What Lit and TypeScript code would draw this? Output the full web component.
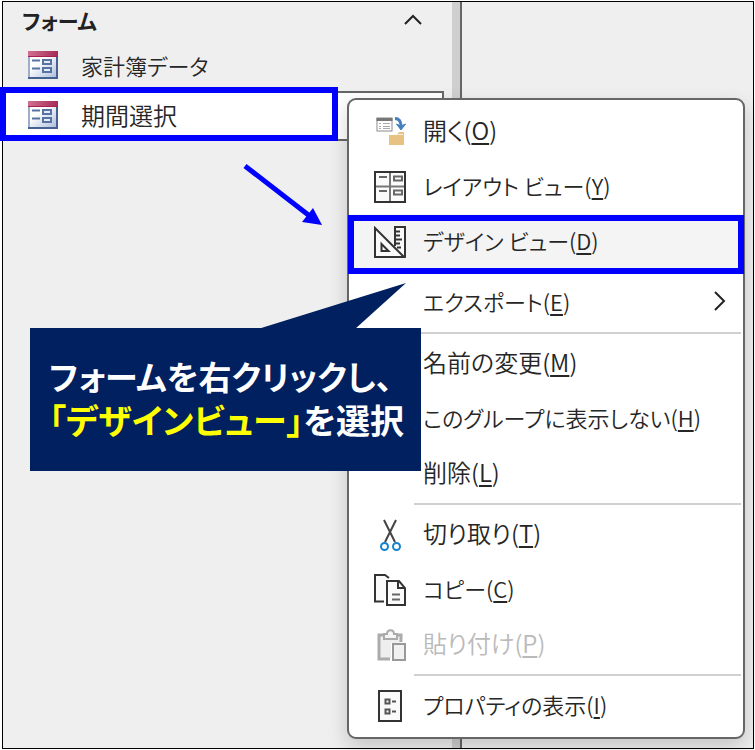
import { LitElement, html, css, svg, nothing } from "lit";
import { customElement } from "lit/decorators.js";
import { classMap } from "lit/directives/class-map.js";

interface MenuItem {
  label: string;
  key: string;
  icon?: string;
  disabled?: boolean;
  submenu?: boolean;
  current?: boolean;
  /** Labels made mostly of kana are set one step smaller. */
  kana?: boolean;
}

const GROUPS: MenuItem[][] = [
  [
    { label: "開く", key: "O", icon: "open" },
    { label: "レイアウト ビュー", key: "Y", icon: "layout", kana: true },
    { label: "デザイン ビュー", key: "D", icon: "design", current: true, kana: true },
  ],
  [{ label: "エクスポート", key: "E", submenu: true, kana: true }],
  [
    { label: "名前の変更", key: "M" },
    { label: "このグループに表示しない", key: "H", kana: true },
    { label: "削除", key: "L" },
  ],
  [
    { label: "切り取り", key: "T", icon: "cut" },
    { label: "コピー", key: "C", icon: "copy", kana: true },
    { label: "貼り付け", key: "P", icon: "paste", disabled: true },
  ],
  [{ label: "プロパティの表示", key: "I", icon: "props", kana: true }],
];

const ICONS: Record<string, unknown> = {
  open: svg`
    <rect x="3" y="2" width="15" height="13" fill="#fff" stroke="#8a8a8a"/>
    <path d="M2.500 3.500h16" stroke="#777" stroke-width="3"/>
    <path d="M5 7.500h2M5 10.500h2M5 12.500h2M9 7.500h7M9 10.500h7M9 12.500h7" stroke="#aaa"/>
    <path d="M21 2.500c4 0 6 3 6 8" fill="none" stroke="#4480bd" stroke-width="3"/>
    <path d="M22.500 8l4.500 6 4.500-6-4.500 2z" fill="#4480bd" stroke="#4480bd"/>
    <path d="M15 19h8l2-3h5v13H15z" fill="#e8c282"/>
    <path d="M24 18.500h5" stroke="#fff3dc" stroke-width="1"/>`,
  layout: svg`
    <rect x="1" y="1" width="30" height="30" fill="#fafafa" stroke="#333" stroke-width="2"/>
    <path d="M16 2v28M2 15.500h28" stroke="#777" stroke-width="2"/>
    <path d="M5 6h8M5 20h8" stroke="#666" stroke-width="2"/>
    <path d="M20 5.500h8v4h-8zM20 19.500h8v4h-8z" fill="none" stroke="#666" stroke-width="2"/>`,
  design: svg`
    <path d="M21 18V1h10v30z" fill="#fafafa"/>
    <path d="M1 2v29h29z" fill="#fafafa" stroke="#333" stroke-width="2"/>
    <path d="M21 20V1h10v30" fill="none" stroke="#333" stroke-width="2"/>
    <path d="M22 5.500h4M22 9.500h4M22 13.500h6M22 17.500h4M23 21.500h4" stroke="#333" stroke-width="2"/>
    <path d="M7.500 18v7h7z" fill="none" stroke="#333" stroke-width="2"/>`,
  cut: svg`
    <path d="M10 1l11 22M22 1L11 23" fill="none" stroke="#444" stroke-width="2"/>
    <circle cx="10.500" cy="27.500" r="3.500" fill="#fff" stroke="#1783d0" stroke-width="2"/>
    <circle cx="22.500" cy="27.500" r="3.500" fill="#fff" stroke="#1783d0" stroke-width="2"/>`,
  copy: svg`
    <path d="M10 27.500H1V1h10l4 3" fill="#fafafa" stroke="#333" stroke-width="2"/>
    <path d="M13 7h12l6 7v17H13z" fill="#fafafa" stroke="#333" stroke-width="2"/>
    <path d="M24 7v7h7" fill="none" stroke="#333" stroke-width="2"/>
    <path d="M18 20.500h8M18 25.500h8" stroke="#666" stroke-width="2"/>`,
  paste: svg`
    <path d="M16 30H5V6h22v7" fill="#eee" stroke="#ababab" stroke-width="3"/>
    <path d="M10 10V5h3c0-5 7-5 7 0h3v5z" fill="#f6f6f6" stroke="#ababab" stroke-width="2"/>
    <path d="M17 14h15v17H17z" fill="#fff"/>
    <rect x="19" y="15" width="12" height="16" fill="#f1f1f1" stroke="#999" stroke-width="2"/>`,
  props: svg`
    <rect x="5" y="1" width="22" height="30" fill="#fafafa" stroke="#333" stroke-width="2"/>
    <path d="M11.500 9.500h4v4h-4zM11.500 19.500h4v4h-4z" fill="none" stroke="#555" stroke-width="2"/>
    <path d="M18 11.500h4M18 21.500h4" stroke="#555" stroke-width="2"/>`,
};

@customElement("access-form-icon")
export class AccessFormIcon extends LitElement {
  static styles = css`
    :host { display: flex; }
    svg { display: block; }
  `;
  render() {
    return html`<svg width="30" height="28" viewBox="0 0 30 28" aria-hidden="true">
      <defs>
        <linearGradient id="paper" x1="0" y1="0" x2="1" y2="1">
          <stop offset="0.3" stop-color="#fff"/><stop offset="1" stop-color="#aebfdc"/>
        </linearGradient>
        <linearGradient id="bar" x1="0" y1="0" x2="1" y2="0">
          <stop offset="0" stop-color="#d0708f"/><stop offset="1" stop-color="#a52a58"/>
        </linearGradient>
      </defs>
      <rect width="30" height="28" fill="#9dadcb"/>
      <path d="M0 27h30M29 5v23" stroke="#46618f" stroke-width="2"/>
      <rect x="2" y="6" width="26" height="20" fill="url(#paper)"/>
      <rect width="30" height="6" fill="url(#bar)"/>
      <path d="M0 5.500h30" stroke="#a8204f"/>
      <path d="M4 9.500h8M4 17.500h8" stroke="#5873a3" stroke-width="2"/>
      <path d="M15 9h8v4h-8zM15 17h8v4h-8z" fill="#e7edf7" stroke="#5873a3" stroke-width="2"/>
    </svg>`;
  }
}

@customElement("context-menu")
export class ContextMenu extends LitElement {
  static styles = css`
    :host {
      display: block;
      box-sizing: border-box;
      padding: 4px 0;
      background: #fff;
      border: 2px solid #666;
      border-radius: 9px;
      box-shadow: 0 8px 20px rgba(0, 0, 0, 0.18);
    }
    .row { position: relative; }
    .item {
      display: flex;
      align-items: center;
      gap: 17px;
      width: 100%;
      height: 55px;
      padding: 0 16px 0 25px;
      border: 0;
      background: none;
      color: #262626;
      font: inherit;
      text-align: left;
      white-space: nowrap;
    }
    .item.kana { font-size: 22px; }
    .item.current { background: #f4f4f4; }
    .item:disabled { color: #bababa; }
    .icon { flex: none; width: 32px; height: 32px; }
    .label { flex: 1; padding-bottom: 4px; }
    .key { text-decoration-thickness: 2px; text-underline-offset: 3px; }
    .rule {
      height: 2px;
      margin: 2px 2px 2px 65px;
      border: 0;
      background: #d0d0d0;
    }
    .marker {
      position: absolute;
      inset: 1px -1px -5px -1px;
      border: 6px solid #00f;
      pointer-events: none;
    }
  `;

  private item(i: MenuItem) {
    return html`<div class="row">
      <button class=${classMap({ item: true, current: !!i.current, kana: !!i.kana })} role="menuitem" ?disabled=${i.disabled}>
        <svg class="icon" viewBox="0 0 32 32" aria-hidden="true">${i.icon ? ICONS[i.icon] : nothing}</svg>
        <span class="label">${i.label}(<u class="key">${i.key}</u>)</span>
        ${i.submenu
          ? html`<svg width="14" height="24" viewBox="0 0 14 24" aria-hidden="true">
              <path d="M2 1l9 9-9 9" fill="none" stroke="#222" stroke-width="2"/></svg>`
          : nothing}
      </button>
      ${i.current ? html`<div class="marker"></div>` : nothing}
    </div>`;
  }

  render() {
    return GROUPS.map(
      (g, n) => html`${n ? html`<hr class="rule">` : nothing}${g.map((i) => this.item(i))}`
    );
  }
}

@customElement("app-root")
export class AppRoot extends LitElement {
  static styles = css`
    :host {
      display: flex;
      box-sizing: border-box;
      position: relative;
      min-height: 100vh;
      padding: 1px 1px 1px 2px;
      background: #fff;
      color: #262626;
      font: 350 24px/32px "Noto Sans CJK JP", sans-serif;
      font-feature-settings: "palt";
    }
    .window {
      flex: 1;
      display: flex;
      border: 1px solid #000;
      background: #efefef;
    }
    .nav { flex: 0 1 449px; }
    .splitter {
      flex: none;
      width: 8px;
      background: #cfcfcf;
      border-right: 2px solid #666;
    }
    .group {
      display: flex;
      align-items: center;
      justify-content: space-between;
      box-sizing: border-box;
      width: 100%;
      height: 39px;
      padding: 0 30px 3px 19px;
      border: 0;
      background: none;
      color: #222;
      font: inherit;
      font-size: 21px;
      font-weight: 700;
    }
    .list { margin: 0; padding: 0; list-style: none; }
    .entry { position: relative; margin-right: 8px; }
    .object {
      display: flex;
      align-items: center;
      gap: 23px;
      box-sizing: border-box;
      width: 100%;
      height: 50px;
      padding: 0 0 2px 23px;
      border: 2px solid transparent;
      background: none;
      color: inherit;
      font: inherit;
    }
    .object.kana { font-size: 22px; }
    .object.selected { background: #fff; border-color: #666; }
    .marker {
      box-sizing: border-box;
      position: absolute;
      top: -4px;
      left: -3px;
      width: 338px;
      height: 54px;
      border: 6px solid #00f;
      pointer-events: none;
    }
    .menu { position: absolute; top: 98px; left: 347px; right: 10px; }
    .arrow { position: absolute; top: 160px; left: 240px; pointer-events: none; }
    .callout {
      box-sizing: border-box;
      position: absolute;
      top: 328px;
      left: 30px;
      width: 391px;
      margin: 0;
      padding: 26px 19px 29px;
      background: #002060;
      color: #fff;
      font-size: 33px;
      line-height: 44px;
      font-weight: 700;
      white-space: nowrap;
    }
    .line { display: block; }
    .line.target { font-size: 34px; }
    .em { color: #ff0; }
    .tail { position: absolute; top: -46px; left: 228px; }
  `;

  render() {
    return html`
      <main class="window">
        <nav class="nav">
          <button class="group" aria-expanded="true">フォーム
            <svg width="18" height="12" viewBox="0 0 18 12" aria-hidden="true">
              <path d="M1 10l8-8 8 8" fill="none" stroke="#222" stroke-width="2"/></svg>
          </button>
          <ul class="list">
            <li class="entry"><button class="object kana"><access-form-icon></access-form-icon>家計簿データ</button></li>
            <li class="entry">
              <button class="object selected"><access-form-icon></access-form-icon>期間選択</button>
              <div class="marker"></div>
            </li>
          </ul>
        </nav>
        <div class="splitter"></div>
      </main>
      <context-menu class="menu" role="menu"></context-menu>
      <svg class="arrow" width="84" height="70" viewBox="0 0 84 70" aria-hidden="true">
        <path d="M5 6l66 51" stroke="#00f" stroke-width="5"/>
        <path d="M82 65L73 48 62 62z" fill="#00f"/>
      </svg>
      <p class="callout">
        <svg class="tail" width="150" height="47" viewBox="0 0 150 47" aria-hidden="true">
          <path d="M0 47L148 1 97 47z" fill="#002060"/></svg>
        <span class="line">フォームを右クリックし、</span>
        <span class="line target"><span class="em">「デザインビュー」</span>を選択</span>
      </p>
    `;
  }
}
